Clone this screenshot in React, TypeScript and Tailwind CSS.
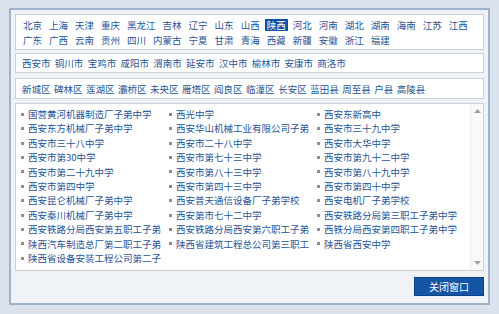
import React from "react";

const provinces = [
  "北京", "上海", "天津", "重庆", "黑龙江", "吉林", "辽宁", "山东", "山西", "陕西", "河北", "河南", "湖北", "湖南", "海南", "江苏", "江西",
  "广东", "广西", "云南", "贵州", "四川", "内蒙古", "宁夏", "甘肃", "青海", "西藏", "新疆", "安徽", "浙江", "福建",
];

const cities = ["西安市", "铜川市", "宝鸡市", "咸阳市", "渭南市", "延安市", "汉中市", "榆林市", "安康市", "商洛市"];

const districts = ["新城区", "碑林区", "莲湖区", "灞桥区", "未央区", "雁塔区", "阎良区", "临潼区", "长安区", "蓝田县", "周至县", "户县", "高陵县"];

// names longer than 14 characters are cut, as the list does
const schools = [
  "国营黄河机器制造厂子弟中学", "西光中学", "西安东新高中",
  "西安东方机械厂子弟中学", "西安华山机械工业有限公司子弟", "西安市三十九中学",
  "西安市三十八中学", "西安市二十八中学", "西安市大华中学",
  "西安市第30中学", "西安市第七十三中学", "西安市第九十二中学",
  "西安市第二十九中学", "西安市第八十三中学", "西安市第八十九中学",
  "西安市第四中学", "西安市第四十三中学", "西安市第四十中学",
  "西安昆仑机械厂子弟中学", "西安普天通信设备厂子弟学校", "西安电机厂子弟学校",
  "西安秦川机械厂子弟中学", "西安第市七十二中学", "西安铁路分局第三职工子弟中学",
  "西安铁路分局西安第五职工子弟", "西安铁路分局西安第六职工子弟", "西铁分局西安第四职工子弟中学",
  "陕西汽车制造总厂第二职工子弟", "陕西省建筑工程总公司第三职工", "陕西省西安中学",
  "陕西省设备安装工程公司第二子",
];

const font = { fontFamily: '"Noto Sans CJK SC", "Noto Sans", sans-serif' };

export default function App() {
  return (
    <div className="w-[499px] h-[314px] bg-[#dbe2eb] pt-[8px] pl-[9px] overflow-hidden" style={font}>
      <div className="w-[481px] border-2 border-[#9db3cc] bg-[#eff2f6] px-[4px] pt-[4px] pb-[7px]">
        {/* provinces */}
        <div className="bg-white border border-[#c9cfd6] pl-[5px] pr-[2px] pt-[4px] pb-[3px] flex flex-wrap gap-x-[3px] gap-y-[3px] text-[9.5px] text-[#1f5597]">
          {provinces.map((p) => (
            <span
              key={p}
              className={
                "h-[12px] leading-[12px] px-[2px] whitespace-nowrap " +
                (p === "陕西" ? "bg-[#0f52a3] text-white" : "")
              }
            >
              {p}
            </span>
          ))}
        </div>

        {/* cities */}
        <div className="mt-[3px] bg-white border border-[#c9cfd6] pl-[6px] pt-[2px] pb-[1px] flex gap-x-[4.3px] text-[9.5px] leading-[15px] text-[#1f5597]">
          {cities.map((c) => (
            <span key={c} className="whitespace-nowrap">{c}</span>
          ))}
        </div>

        {/* districts */}
        <div className="mt-[5px] bg-white border border-[#c9cfd6] pl-[6px] pt-[3px] pb-[1px] flex gap-x-[3.5px] text-[9.5px] leading-[15px] text-[#1f5597]">
          {districts.map((d) => (
            <span key={d} className="whitespace-nowrap">{d}</span>
          ))}
        </div>

        {/* schools */}
        <div className="mt-[4px] h-[168px] bg-white border border-[#c9cfd6] flex">
          <div className="flex-1 pl-[5px] pt-[3px] overflow-hidden">
            <div className="grid grid-cols-[148px_148px_148px] text-[9.5px] leading-[14.4px] text-[#1f5597]">
              {schools.map((s) => (
                <div key={s} className="flex items-center whitespace-nowrap">
                  <span className="w-[3px] h-[3px] bg-[#8c8c8c] shrink-0 mr-[4px]" />
                  <span>{s}</span>
                </div>
              ))}
            </div>
          </div>
          <div className="w-[13px] border-l border-[#eeeeee] bg-[#fafafa] flex flex-col justify-between items-center py-[5px]">
            <svg width="7" height="4" viewBox="0 0 7 4">
              <path d="M0 4 L3.5 0 L7 4 Z" fill="#a0a0a0" />
            </svg>
            <svg width="7" height="4" viewBox="0 0 7 4">
              <path d="M0 0 L3.5 4 L7 0 Z" fill="#a0a0a0" />
            </svg>
          </div>
        </div>

        <div className="mt-[6px] flex justify-end">
          <button className="w-[70px] h-[19px] bg-[#1456a5] border border-[#0d4185] text-white text-[10px] leading-[17px] text-center">
            关闭窗口
          </button>
        </div>
      </div>
    </div>
  );
}
